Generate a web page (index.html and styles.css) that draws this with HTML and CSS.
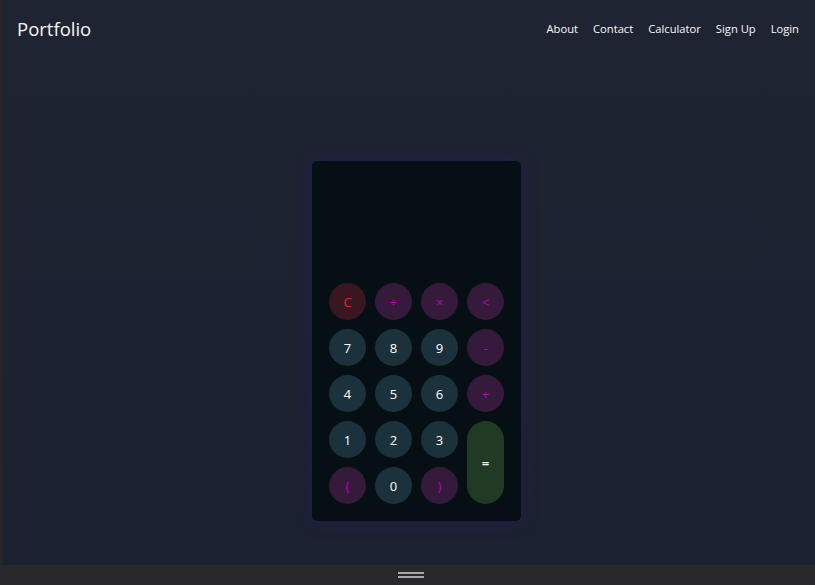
FILE: index.html
```html
<!DOCTYPE html>
<html>
<head>
<meta charset="utf-8">
<link rel="stylesheet" href="styles.css">
</head>
<body>
<div class="app">
  <header class="topbar">
    <div class="brand">Portfolio</div>
    <nav class="nav">
      <a href="#">About</a>
      <a href="#">Contact</a>
      <a href="#">Calculator</a>
      <a href="#">Sign Up</a>
      <a href="#">Login</a>
    </nav>
  </header>
  <main class="main">
    <div class="calc">
      <div class="display"></div>
      <div class="keys">
        <button class="key clear">C</button>
        <button class="key op">÷</button>
        <button class="key op">×</button>
        <button class="key op">&lt;</button>
        <button class="key num">7</button>
        <button class="key num">8</button>
        <button class="key num">9</button>
        <button class="key op">-</button>
        <button class="key num">4</button>
        <button class="key num">5</button>
        <button class="key num">6</button>
        <button class="key op">+</button>
        <button class="key num">1</button>
        <button class="key num">2</button>
        <button class="key num">3</button>
        <button class="key eq">=</button>
        <button class="key op">(</button>
        <button class="key num">0</button>
        <button class="key op">)</button>
      </div>
    </div>
  </main>
</div>
<div class="dock"><span class="handle"></span></div>
</body>
</html>
```
FILE: styles.css
```css
* { box-sizing: border-box; }
html, body { margin: 0; padding: 0; height: 100%; }
body {
  display: flex;
  flex-direction: column;
  background: #262626;
  font-family: "Open Sans", "DejaVu Sans", sans-serif;
  overflow: hidden;
}
.app {
  flex: 1;
  margin-left: 3px;
  background: linear-gradient(#1f2433, #1b2130);
  display: flex;
  flex-direction: column;
}
.topbar {
  height: 56px;
  display: flex;
  align-items: center;
  justify-content: space-between;
  padding: 0 16px 0 14px;
}
.brand {
  color: #f4f4f4;
  font-size: 18.5px;
}
.nav {
  display: flex;
  gap: 15px;
}
.nav a {
  color: #f8f8f8;
  text-decoration: none;
  font-size: 11.2px;
}
.main {
  flex: 1;
  display: flex;
  justify-content: center;
  padding-top: 105px;
}
.calc {
  width: 209px;
  height: 360px;
  margin-left: 15px;
  background: #060f14;
  border-radius: 5px;
  box-shadow: 0 0 14px 2px rgba(40, 30, 90, 0.55);
  display: flex;
  flex-direction: column;
  padding: 0 17px 17px;
}
.display { flex: 1; }
.keys {
  display: grid;
  grid-template-columns: repeat(4, 37px);
  grid-auto-rows: 37px;
  gap: 9px;
}
.key {
  border: none;
  border-radius: 50%;
  font-family: "Open Sans", "DejaVu Sans", sans-serif;
  font-size: 13px;
  padding: 0;
  color: #ffffff;
  display: flex;
  align-items: center;
  justify-content: center;
}
.num { background: #1b313b; }
.op { background: #361a3c; color: #c000c0; }
.clear { background: #3a1620; color: #e8203c; }
.eq {
  background: #203a24;
  grid-row: span 2;
  grid-column: 4;
  border-radius: 19px;
  font-weight: 700;
}
.dock {
  height: 20px;
  background: #29292c;
  display: flex;
  justify-content: center;
  align-items: center;
  padding-left: 6px;
}
.handle {
  width: 26px;
  height: 6px;
  border-top: 2px solid #a8a8a8;
  border-bottom: 2px solid #a8a8a8;
}
```
